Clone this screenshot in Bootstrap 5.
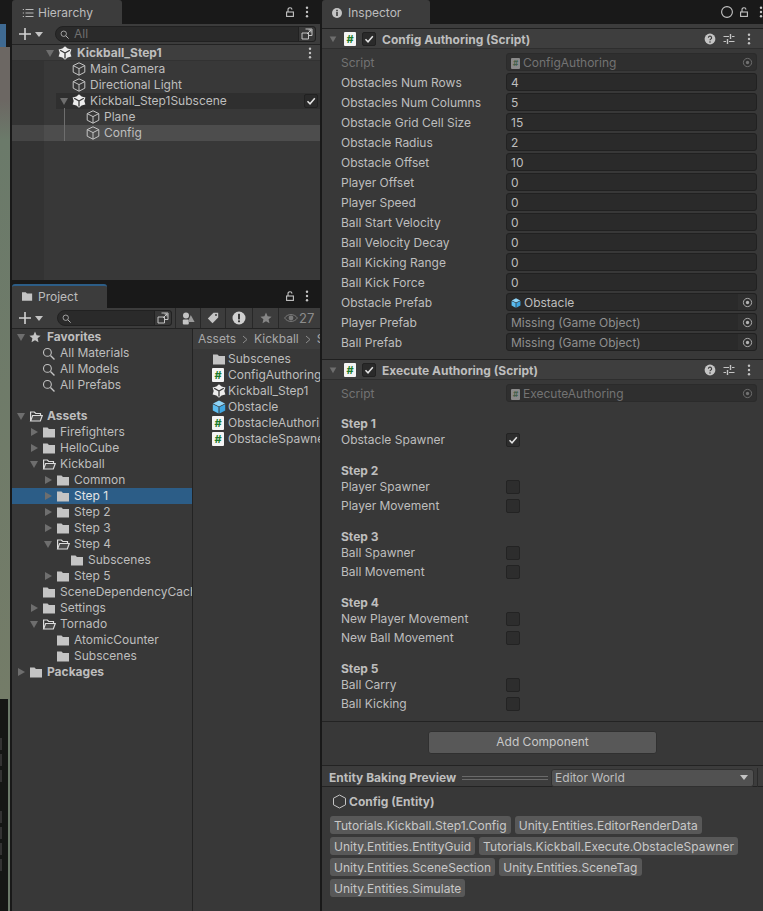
<!DOCTYPE html>
<html lang="en">
<head>
  <meta charset="UTF-8">
  <title>Unity Editor - Inspector</title>
  <link href="https://cdn.jsdelivr.net/npm/bootstrap@5.3.0/dist/css/bootstrap.min.css" rel="stylesheet">
  <style>
    html, body { height: 100%; }
    body { background: #191919; font-family: Inter, "Liberation Sans", sans-serif; font-size: 12px; line-height: 16px; color: #bebebe; overflow: hidden; }
    svg { display: block; flex: none; }

    .editor { width: 763px; height: 911px; }
    .scene-strip { width: 10px; flex: none; background: linear-gradient(#6c6763 0, #6c6763 100px, #6b7a6a 140px, #747c68 699px); }
    .scene-top { height: 24px; background: #191919; }
    .scene-blue { height: 23px; background: #3f6a92; border-right: 4px solid #191919; }
    .scene-tools { height: 212px; margin-top: auto; padding-top: 39px; background: #151715; border-right: 2px solid #6b7a6a; }
    .scene-key { width: 2px; height: 12px; margin-bottom: 4px; background: #333; }
    .scene-key-gap { margin-bottom: 29px; }
    .left-col { width: 308px; margin: 0 2px; flex: none; }
    .insp-col { width: 441px; flex: none; background: #383838; }

    /* tabs */
    .tabbar { height: 24px; flex: none; background: #191919; }
    .tab { height: 24px; background: #3c3c3c; border-radius: 3px 3px 0 0; padding: 2px 0 0 10px; color: #bdbdbd; gap: 4px; }
    .tab-hier { width: 110px; }
    .tab-proj { width: 95px; padding-top: 0; border-top: 2px solid #2c5d87; }
    .tab-insp { width: 108px; gap: 6px; }
    .tab-tools { gap: 11px; padding-right: 11px; }
    .insp-tools { padding-right: 0; }
    .circle-tool { margin-right: -4px; }

    .toolbar { height: 21px; flex: none; background: #3c3c3c; border-bottom: 1px solid #232323; }
    .plus { width: 30px; padding-left: 7px; gap: 4px; }
    .searchbox { height: 16px; background: #2a2a2a; border: 1px solid #212121; border-radius: 8px 3px 3px 8px; color: #6f6f6f; padding-left: 4px; gap: 5px; }
    .search-h { width: 261px; margin-left: 13px; }
    .search-p { width: 115px; margin-left: 15px; }
    .search-end { width: 17px; height: 14px; border-left: 1px solid #212121; background: #383838; border-radius: 0 3px 3px 0; }
    .tool-btn { width: 26px; height: 20px; border-left: 1px solid #282828; }
    .tool-narrow { width: 25px; }
    .tool-wide { width: 27px; }
    .first-tool { margin-left: 3px; }
    .eye-count { width: 42px; height: 20px; border-left: 1px solid #282828; color: #8c8c8c; font-size: 13px; gap: 1px; padding-left: 5px; }

    /* trees */
    .hier-pane { height: 235px; flex: none; background: linear-gradient(90deg, #333 32px, #383838 32px); }
    .proj-pane { height: 583px; background: #383838; }
    .tree-row { height: 16px; white-space: nowrap; overflow: hidden; }
    .tree-row .caret-slot { width: 12px; flex: none; }
    .tree-row .icon-slot { width: 14px; margin: 0 4px 0 2px; flex: none; }
    .scene-head { background: #3e3e3e; border-bottom: 1px solid #323232; font-weight: 700; }
    .scene-name { padding-left: 1px; }
    .sub-row { background: linear-gradient(90deg, transparent 44px, #2f2f2f 44px); }
    .sel-row { background: linear-gradient(90deg, #454545 32px, #4d4d4d 32px); }
    .lv0p { padding-left: 3px; }
    .lv1p { padding-left: 16px; }
    .lv2p { padding-left: 30px; }
    .lv3p { padding-left: 44px; }
    .hier-lv0 { padding-left: 32px; }
    .hier-lv1 { padding-left: 46px; }
    .hier-lv2 { padding-left: 60px; }
    .sub-check { width: 14px; height: 14px; margin-left: auto; margin-right: 2px; background: #2a2a2a; border: 1px solid #212121; border-radius: 2px; }
    .guide { position: absolute; left: 52px; top: 63px; width: 1px; height: 33px; background: #6e6e6e; }
    .fav-head { font-weight: 700; }
    .tree-sel { background: #2c5d87; color: #e4e4e4; }
    .tree-col { width: 181px; flex: none; overflow: hidden; border-right: 1px solid #232323; }
    .gap-row { height: 15px; }
    .files-col { width: 127px; overflow: hidden; }
    .crumbs { height: 20px; margin-bottom: 2px; background: #3e3e3e; padding-left: 5px; white-space: nowrap; gap: 6px; color: #a9a9a9; }
    .file-row { height: 16px; padding-left: 19px; white-space: nowrap; gap: 2px; }
    .file-row .script-badge { margin-right: 2px; }

    /* inspector */
    .insp-top { height: 4px; flex: none; background: #3c3c3c; }
    .comp-head { height: 21px; flex: none; background: #3e3e3e; border-top: 1px solid #1f1f1f; border-bottom: 1px solid #2e2e2e; padding-left: 6px; font-weight: 700; }
    .comp-title { padding-top: 2px; }
    .comp-foldout { width: 10px; margin-right: 6px; }
    .script-badge { width: 12px; height: 14px; flex: none; background: #f4f4f4; border-radius: 1px; color: #1a7a2b; font-size: 11px; line-height: 14px; font-weight: 700; text-align: center; margin-right: 6px; }
    .field-badge { width: 9px; height: 11px; flex: none; background: #8a8a8a; border-radius: 1px; color: #44604a; font-size: 8px; line-height: 11px; font-weight: 700; text-align: center; }
    .en-check { width: 14px; height: 14px; background: #2a2a2a; border: 1px solid #212121; border-radius: 2px; margin-right: 6px; }
    .comp-tools { margin-left: auto; gap: 7px; padding-right: 12px; }
    .kebab-tool { margin-left: 5px; }
    .prop-list { padding: 3px 6px 7px 19px; }
    .script-list { padding-bottom: 0; }
    .prop-row { height: 20px; }
    .prop-label { width: 165px; flex: none; padding-top: 2px; }
    .prop-field { width: 251px; height: 18px; background: #2a2a2a; border: 1px solid #212121; border-radius: 3px; padding: 2px 0 0 4px; gap: 3px; white-space: nowrap; }
    .field-end { width: 18px; height: 16px; margin: -2px 0 0 auto; border-radius: 0 3px 3px 0; background: #2f2f2f; }
    .muted-row { color: #737373; }
    .muted-row .prop-field { background: #2f2f2f; border-color: #2b2b2b; }
    .missing { color: #8f8f8f; }

    .step-list { padding: 0 6px 0 19px; }
    .step-group { padding-top: 15px; }
    .step-group:first-child { padding-top: 13px; }
    .step-title { height: 16px; font-weight: 700; }
    .step-row { height: 16px; }
    .step-row + .step-row { margin-top: 3px; }
    .step-name { width: 165px; flex: none; }
    .step-box { width: 14px; height: 14px; background: #2d2d2d; border: 1px solid #232323; border-radius: 2px; }

    .add-zone { height: 45px; flex: none; border-top: 1px solid #232323; border-bottom: 1px solid #232323; margin-top: 9px; padding-top: 9px; }
    .add-btn { width: 229px; height: 23px; line-height: 18px; padding: 0 0 2px; background: #585858; border: 1px solid #303030; border-radius: 3px; color: #c8c8c8; font-size: 12px; }
    .bake-bar { height: 21px; flex: none; background: #3c3c3c; border-bottom: 1px solid #232323; padding: 3px 0 0 7px; font-weight: 700; white-space: nowrap; }
    .bake-lines { width: 86px; height: 4px; flex: none; margin: 0 3px 0 6px; border-top: 1px solid #6a6a6a; border-bottom: 1px solid #6a6a6a; }
    .bake-select { width: 203px; height: 18px; flex: none; background: #515151; border: 1px solid #303030; border-radius: 3px; padding: 0 5px 0 3px; font-weight: 400; }
    .bake-end { width: 5px; height: 20px; flex: none; border-left: 1px solid #2b2b2b; margin-left: 3px; }
    .entity-pane { background: #383838; padding: 5px 8px 0; }
    .entity-title { height: 18px; font-weight: 700; margin-bottom: 6px; gap: 2px; padding-left: 2px; }
    .entity-name { padding-top: 2px; }
    .chip-list { gap: 3px 4px; width: 420px; }
    .chip { height: 18px; padding: 0 4px; background: #585858; border-radius: 3px; color: #c8c8c8; white-space: nowrap; line-height: 20px; letter-spacing: .05px; }
  </style>
</head>
<body>
  <svg width="0" height="0" class="position-absolute">
    <defs>
      <symbol id="cube" viewBox="0 0 14 14"><path d="M7 .8 12.8 3.6V10.2L7 13.2 1.2 10.2V3.6ZM1.2 3.6 7 6.6 12.8 3.6M7 6.6V13.2" fill="none" stroke="#c4c4c4" stroke-width="1"/></symbol>
      <symbol id="cube-blue" viewBox="0 0 14 14"><path d="M7 .5 13 3.4 7 6.4 1 3.4Z" fill="#8fd4f7"/><path d="M.8 4.2 6.5 7.1V13.5L.8 10.5Z" fill="#5cbdf0"/><path d="M13.2 4.2 7.5 7.1V13.5L13.2 10.5Z" fill="#3ea6e2"/></symbol>
      <symbol id="unity" viewBox="0 0 14 14"><path d="M7 .3 9.6 2.4 13.4 3.4 12.3 7 13.4 10.6 9.6 11.6 7 13.7 4.4 11.6.6 10.6 1.7 7 .6 3.4 4.4 2.4Z" fill="#ececec"/><path d="M7 7V12.5M7 7 2.2 4.2M7 7 11.8 4.2" stroke="#383838" stroke-width="1.3" fill="none"/></symbol>
      <symbol id="folder" viewBox="0 0 14 14"><path d="M1 2.5H5.5L7 4H13V12.5H1Z" fill="#c4c4c4"/></symbol>
      <symbol id="folder-open" viewBox="0 0 14 14"><path d="M1.6 12V3H5.3L6.8 4.5H11.5V6.5" fill="none" stroke="#dcdcdc" stroke-width="1.2"/><path d="M1.6 12H11.3L13.3 6.5H3.6Z" fill="#4a4a4a" stroke="#dcdcdc" stroke-width="1.2"/></symbol>
      <symbol id="caret-d" viewBox="0 0 12 12"><path d="M2 3H10L6 10Z" fill="#6e6e6e"/></symbol>
      <symbol id="caret-r" viewBox="0 0 12 12"><path d="M3 2 10 6 3 10Z" fill="#6e6e6e"/></symbol>
      <symbol id="lock" viewBox="0 0 8 10"><rect x=".6" y="5" width="6.8" height="4.4" fill="none" stroke="#c4c4c4" stroke-width="1.1"/><path d="M2 5V2.8A2 2 0 0 1 6 2.6" fill="none" stroke="#c4c4c4" stroke-width="1.1"/></symbol>
      <symbol id="kebab" viewBox="0 0 4 12"><circle cx="2" cy="1.8" r="1.2" fill="#c4c4c4"/><circle cx="2" cy="6" r="1.2" fill="#c4c4c4"/><circle cx="2" cy="10.2" r="1.2" fill="#c4c4c4"/></symbol>
      <symbol id="plus" viewBox="0 0 12 12"><path d="M6 0V12M0 6H12" stroke="#d2d2d2" stroke-width="1.6"/></symbol>
      <symbol id="drop" viewBox="0 0 8 5"><path d="M0 0H8L4 5Z" fill="#c4c4c4"/></symbol>
      <symbol id="mag" viewBox="0 0 12 12"><circle cx="5" cy="5" r="3.6" fill="none" stroke="#c4c4c4" stroke-width="1"/><path d="M7.8 7.8 11.5 11.5" stroke="#c4c4c4" stroke-width="1.2"/></symbol>
      <symbol id="expand" viewBox="0 0 12 12"><path d="M4.5 1H11V7.5H8M1 5H7.5V11H1Z M6 6 10 2M7.5 2H10V4.5" fill="none" stroke="#c4c4c4" stroke-width="1"/></symbol>
      <symbol id="picker" viewBox="0 0 12 12"><circle cx="6" cy="6" r="4.5" fill="none" stroke="#b4b4b4" stroke-width="1"/><circle cx="6" cy="6" r="1.8" fill="#b4b4b4"/></symbol>
      <symbol id="tick" viewBox="0 0 12 12"><path d="M2.5 6.3 5 8.8 9.8 3.2" fill="none" stroke="#e4e4e4" stroke-width="1.5"/></symbol>
      <symbol id="help" viewBox="0 0 12 12"><circle cx="6" cy="6" r="5.4" fill="#c4c4c4"/><path d="M4.4 4.7A1.6 1.6 0 1 1 6.6 6.2C6.1 6.5 6 6.7 6 7.3" fill="none" stroke="#3e3e3e" stroke-width="1.2"/><circle cx="6" cy="9" r=".8" fill="#3e3e3e"/></symbol>
      <symbol id="sliders" viewBox="0 0 12 12"><path d="M.5 3.5H6M9 3.5H11.5M.5 8.5H3M6 8.5H11.5" stroke="#c4c4c4" stroke-width="1.2"/><path d="M7.5 1V6M4.5 6V11" stroke="#c4c4c4" stroke-width="1.4"/></symbol>
      <symbol id="star" viewBox="0 0 12 12"><path d="M6 .6 7.6 4.3 11.6 4.7 8.6 7.3 9.5 11.3 6 9.2 2.5 11.3 3.4 7.3.4 4.7 4.4 4.3Z" fill="#c4c4c4"/></symbol>
    </defs>
  </svg>

  <div class="editor d-flex">
    <div class="scene-strip d-flex flex-column">
      <div class="scene-top"></div>
      <div class="scene-blue"></div>
      <div class="scene-tools">
        <div class="scene-key"></div>
        <div class="scene-key"></div>
        <div class="scene-key scene-key-gap"></div>
        <div class="scene-key"></div>
        <div class="scene-key"></div>
        <div class="scene-key"></div>
        <div class="scene-key"></div>
      </div>
    </div>

    <div class="left-col d-flex flex-column">
      <!-- Hierarchy -->
      <div class="tabbar d-flex justify-content-between">
        <div class="tab tab-hier d-flex align-items-center">
          <svg width="12" height="12" viewBox="0 0 12 12"><path d="M3.5 2.5H11.5M3.5 6H11.5M3.5 9.5H11.5" stroke="#b8b8b8"/><path d="M.8 2.5H2M.8 6H2M.8 9.5H2" stroke="#b8b8b8"/></svg>
          <span>Hierarchy</span>
        </div>
        <div class="tab-tools d-flex align-items-center">
          <svg width="8" height="10"><use href="#lock"/></svg>
          <svg width="4" height="12"><use href="#kebab"/></svg>
        </div>
      </div>
      <div class="toolbar d-flex align-items-center">
        <div class="plus d-flex align-items-center">
          <svg width="12" height="12"><use href="#plus"/></svg>
          <svg width="8" height="5"><use href="#drop"/></svg>
        </div>
        <div class="searchbox search-h d-flex align-items-center">
          <svg width="9" height="9"><use href="#mag"/></svg>
          <span class="flex-grow-1">All</span>
          <div class="search-end d-flex align-items-center justify-content-center"><svg width="12" height="12"><use href="#expand"/></svg></div>
        </div>
      </div>
      <div class="hier-pane position-relative">
        <div class="tree-row scene-head hier-lv0 d-flex align-items-center">
          <span class="caret-slot"><svg width="12" height="12"><use href="#caret-d"/></svg></span>
          <span class="icon-slot"><svg width="14" height="14"><use href="#unity"/></svg></span>
          <span class="scene-name flex-grow-1">Kickball_Step1</span>
          <svg class="me-2" width="4" height="12"><use href="#kebab"/></svg>
        </div>
        <div class="tree-row hier-lv1 d-flex align-items-center">
          <span class="caret-slot"></span>
          <span class="icon-slot"><svg width="14" height="14"><use href="#cube"/></svg></span>
          <span>Main Camera</span>
        </div>
        <div class="tree-row hier-lv1 d-flex align-items-center">
          <span class="caret-slot"></span>
          <span class="icon-slot"><svg width="14" height="14"><use href="#cube"/></svg></span>
          <span>Directional Light</span>
        </div>
        <div class="tree-row hier-lv1 sub-row d-flex align-items-center">
          <span class="caret-slot"><svg width="12" height="12"><use href="#caret-d"/></svg></span>
          <span class="icon-slot"><svg width="14" height="14"><use href="#unity"/></svg></span>
          <span>Kickball_Step1Subscene</span>
          <span class="sub-check d-flex align-items-center justify-content-center"><svg width="12" height="12"><use href="#tick"/></svg></span>
        </div>
        <div class="tree-row hier-lv2 d-flex align-items-center">
          <span class="caret-slot"></span>
          <span class="icon-slot"><svg width="14" height="14"><use href="#cube"/></svg></span>
          <span>Plane</span>
        </div>
        <div class="tree-row hier-lv2 sel-row d-flex align-items-center">
          <span class="caret-slot"></span>
          <span class="icon-slot"><svg width="14" height="14"><use href="#cube"/></svg></span>
          <span>Config</span>
        </div>
        <div class="guide"></div>
      </div>

      <!-- Project -->
      <div class="tabbar mt-1 d-flex justify-content-between">
        <div class="tab tab-proj d-flex align-items-center">
          <svg width="12" height="12" viewBox="1 1 12 12"><use href="#folder"/></svg>
          <span>Project</span>
        </div>
        <div class="tab-tools d-flex align-items-center">
          <svg width="8" height="10"><use href="#lock"/></svg>
          <svg width="4" height="12"><use href="#kebab"/></svg>
        </div>
      </div>
      <div class="toolbar d-flex align-items-center">
        <div class="plus d-flex align-items-center">
          <svg width="12" height="12"><use href="#plus"/></svg>
          <svg width="8" height="5"><use href="#drop"/></svg>
        </div>
        <div class="searchbox search-p d-flex align-items-center">
          <svg width="9" height="9"><use href="#mag"/></svg>
          <span class="flex-grow-1"></span>
          <div class="search-end d-flex align-items-center justify-content-center"><svg width="12" height="12"><use href="#expand"/></svg></div>
        </div>
        <div class="tool-btn tool-narrow first-tool d-flex align-items-center justify-content-center">
          <svg width="13" height="13" viewBox="0 0 13 13"><circle cx="4" cy="3.5" r="3" fill="#c4c4c4"/><rect x=".8" y="7.5" width="6" height="5" rx="1" fill="#c4c4c4"/><path d="M8.8 3 12.6 10H5.8Z" fill="#9a9a9a"/></svg>
        </div>
        <div class="tool-btn tool-narrow d-flex align-items-center justify-content-center">
          <svg width="12" height="12" viewBox="0 0 12 12"><path d="M6.5.8H11.2V5.5L5.5 11.2.8 6.5Z" fill="#c4c4c4"/><circle cx="9" cy="3" r="1" fill="#3c3c3c"/></svg>
        </div>
        <div class="tool-btn tool-wide d-flex align-items-center justify-content-center">
          <svg width="14" height="14" viewBox="0 0 14 14"><circle cx="7" cy="7" r="6.5" fill="#d0d0d0"/><rect x="6" y="2.8" width="2" height="5.6" fill="#3c3c3c"/><rect x="6" y="9.4" width="2" height="1.8" fill="#3c3c3c"/></svg>
        </div>
        <div class="tool-btn d-flex align-items-center justify-content-center">
          <svg width="12" height="12" opacity=".55"><use href="#star"/></svg>
        </div>
        <div class="eye-count d-flex align-items-center">
          <svg width="14" height="10" viewBox="0 0 14 10"><path d="M.6 5C3.6.4 10.4.4 13.4 5 10.4 9.6 3.6 9.6.6 5Z" fill="none" stroke="#7a7a7a"/><circle cx="7" cy="5" r="2.4" fill="#7a7a7a"/></svg>
          <span>27</span>
        </div>
      </div>
      <div class="proj-pane d-flex">
        <div class="tree-col">
          <div class="tree-row lv0p fav-head d-flex align-items-center">
            <span class="caret-slot"><svg width="12" height="12"><use href="#caret-d"/></svg></span>
            <span class="icon-slot"><svg width="12" height="12"><use href="#star"/></svg></span><span>Favorites</span>
          </div>
          <div class="tree-row lv1p d-flex align-items-center"><span class="caret-slot"></span><span class="icon-slot"><svg width="13" height="13"><use href="#mag"/></svg></span><span>All Materials</span></div>
          <div class="tree-row lv1p d-flex align-items-center"><span class="caret-slot"></span><span class="icon-slot"><svg width="13" height="13"><use href="#mag"/></svg></span><span>All Models</span></div>
          <div class="tree-row lv1p d-flex align-items-center"><span class="caret-slot"></span><span class="icon-slot"><svg width="13" height="13"><use href="#mag"/></svg></span><span>All Prefabs</span></div>
          <div class="gap-row"></div>
          <div class="tree-row lv0p fav-head d-flex align-items-center"><span class="caret-slot"><svg width="12" height="12"><use href="#caret-d"/></svg></span><span class="icon-slot"><svg width="14" height="14"><use href="#folder-open"/></svg></span><span>Assets</span></div>
          <div class="tree-row lv1p d-flex align-items-center"><span class="caret-slot"><svg width="12" height="12"><use href="#caret-r"/></svg></span><span class="icon-slot"><svg width="14" height="14"><use href="#folder"/></svg></span><span>Firefighters</span></div>
          <div class="tree-row lv1p d-flex align-items-center"><span class="caret-slot"><svg width="12" height="12"><use href="#caret-r"/></svg></span><span class="icon-slot"><svg width="14" height="14"><use href="#folder"/></svg></span><span>HelloCube</span></div>
          <div class="tree-row lv1p d-flex align-items-center"><span class="caret-slot"><svg width="12" height="12"><use href="#caret-d"/></svg></span><span class="icon-slot"><svg width="14" height="14"><use href="#folder-open"/></svg></span><span>Kickball</span></div>
          <div class="tree-row lv2p d-flex align-items-center"><span class="caret-slot"><svg width="12" height="12"><use href="#caret-r"/></svg></span><span class="icon-slot"><svg width="14" height="14"><use href="#folder"/></svg></span><span>Common</span></div>
          <div class="tree-row lv2p tree-sel d-flex align-items-center"><span class="caret-slot"><svg width="12" height="12"><use href="#caret-r"/></svg></span><span class="icon-slot"><svg width="14" height="14"><use href="#folder"/></svg></span><span>Step 1</span></div>
          <div class="tree-row lv2p d-flex align-items-center"><span class="caret-slot"><svg width="12" height="12"><use href="#caret-r"/></svg></span><span class="icon-slot"><svg width="14" height="14"><use href="#folder"/></svg></span><span>Step 2</span></div>
          <div class="tree-row lv2p d-flex align-items-center"><span class="caret-slot"><svg width="12" height="12"><use href="#caret-r"/></svg></span><span class="icon-slot"><svg width="14" height="14"><use href="#folder"/></svg></span><span>Step 3</span></div>
          <div class="tree-row lv2p d-flex align-items-center"><span class="caret-slot"><svg width="12" height="12"><use href="#caret-d"/></svg></span><span class="icon-slot"><svg width="14" height="14"><use href="#folder-open"/></svg></span><span>Step 4</span></div>
          <div class="tree-row lv3p d-flex align-items-center"><span class="caret-slot"></span><span class="icon-slot"><svg width="14" height="14"><use href="#folder"/></svg></span><span>Subscenes</span></div>
          <div class="tree-row lv2p d-flex align-items-center"><span class="caret-slot"><svg width="12" height="12"><use href="#caret-r"/></svg></span><span class="icon-slot"><svg width="14" height="14"><use href="#folder"/></svg></span><span>Step 5</span></div>
          <div class="tree-row lv1p d-flex align-items-center"><span class="caret-slot"></span><span class="icon-slot"><svg width="14" height="14"><use href="#folder"/></svg></span><span>SceneDependencyCache</span></div>
          <div class="tree-row lv1p d-flex align-items-center"><span class="caret-slot"><svg width="12" height="12"><use href="#caret-r"/></svg></span><span class="icon-slot"><svg width="14" height="14"><use href="#folder"/></svg></span><span>Settings</span></div>
          <div class="tree-row lv1p d-flex align-items-center"><span class="caret-slot"><svg width="12" height="12"><use href="#caret-d"/></svg></span><span class="icon-slot"><svg width="14" height="14"><use href="#folder-open"/></svg></span><span>Tornado</span></div>
          <div class="tree-row lv2p d-flex align-items-center"><span class="caret-slot"></span><span class="icon-slot"><svg width="14" height="14"><use href="#folder"/></svg></span><span>AtomicCounter</span></div>
          <div class="tree-row lv2p d-flex align-items-center"><span class="caret-slot"></span><span class="icon-slot"><svg width="14" height="14"><use href="#folder"/></svg></span><span>Subscenes</span></div>
          <div class="tree-row lv0p fav-head d-flex align-items-center"><span class="caret-slot"><svg width="12" height="12"><use href="#caret-r"/></svg></span><span class="icon-slot"><svg width="14" height="14"><use href="#folder"/></svg></span><span>Packages</span></div>
        </div>
        <div class="files-col">
          <div class="crumbs d-flex align-items-center">
            <span>Assets</span>
            <svg width="6" height="9" viewBox="0 0 6 9"><path d="M1 1 5 4.5 1 8" fill="none" stroke="#8c8c8c"/></svg>
            <span>Kickball</span>
            <svg width="6" height="9" viewBox="0 0 6 9"><path d="M1 1 5 4.5 1 8" fill="none" stroke="#8c8c8c"/></svg>
            <span>Step 1</span>
          </div>
          <div class="file-row d-flex align-items-center"><svg width="14" height="14"><use href="#folder"/></svg><span>Subscenes</span></div>
          <div class="file-row d-flex align-items-center"><span class="script-badge">#</span><span>ConfigAuthoring</span></div>
          <div class="file-row d-flex align-items-center"><svg width="14" height="14"><use href="#unity"/></svg><span>Kickball_Step1</span></div>
          <div class="file-row d-flex align-items-center"><svg width="14" height="14"><use href="#cube-blue"/></svg><span>Obstacle</span></div>
          <div class="file-row d-flex align-items-center"><span class="script-badge">#</span><span>ObstacleAuthoring</span></div>
          <div class="file-row d-flex align-items-center"><span class="script-badge">#</span><span>ObstacleSpawner</span></div>
        </div>
      </div>
    </div>

    <!-- Inspector -->
    <div class="insp-col d-flex flex-column">
      <div class="tabbar d-flex justify-content-between">
        <div class="tab tab-insp d-flex align-items-center">
          <svg width="10" height="10" viewBox="0 0 10 10"><circle cx="5" cy="5" r="5" fill="#c4c4c4"/><rect x="4.2" y="4" width="1.6" height="4" fill="#3c3c3c"/><rect x="4.2" y="1.8" width="1.6" height="1.5" fill="#3c3c3c"/></svg>
          <span>Inspector</span>
        </div>
        <div class="tab-tools insp-tools d-flex align-items-center">
          <svg class="circle-tool" width="12" height="12" viewBox="0 0 12 12"><circle cx="6" cy="6" r="5.4" fill="none" stroke="#c4c4c4" stroke-width="1.1"/></svg>
          <svg width="8" height="10"><use href="#lock"/></svg>
          <svg width="4" height="12"><use href="#kebab"/></svg>
        </div>
      </div>
      <div class="insp-top"></div>

      <div class="comp-head d-flex align-items-center">
        <svg class="comp-foldout" width="10" height="10" viewBox="0 0 12 12"><use href="#caret-d"/></svg>
        <span class="script-badge">#</span>
        <span class="en-check d-flex align-items-center justify-content-center"><svg width="12" height="12"><use href="#tick"/></svg></span>
        <span class="comp-title">Config Authoring (Script)</span>
        <div class="comp-tools d-flex align-items-center">
          <svg width="12" height="12"><use href="#help"/></svg>
          <svg width="12" height="12"><use href="#sliders"/></svg>
          <svg class="kebab-tool" width="4" height="12"><use href="#kebab"/></svg>
        </div>
      </div>
      <div class="prop-list">
        <div class="prop-row muted-row d-flex align-items-center">
          <span class="prop-label">Script</span>
          <div class="prop-field d-flex align-items-center">
            <span class="field-badge">#</span><span>ConfigAuthoring</span>
            <span class="field-end d-flex align-items-center justify-content-center"><svg class="opacity-50" width="11" height="11"><use href="#picker"/></svg></span>
          </div>
        </div>
        <div class="prop-row d-flex align-items-center"><span class="prop-label">Obstacles Num Rows</span><div class="prop-field d-flex align-items-center">4</div></div>
        <div class="prop-row d-flex align-items-center"><span class="prop-label">Obstacles Num Columns</span><div class="prop-field d-flex align-items-center">5</div></div>
        <div class="prop-row d-flex align-items-center"><span class="prop-label">Obstacle Grid Cell Size</span><div class="prop-field d-flex align-items-center">15</div></div>
        <div class="prop-row d-flex align-items-center"><span class="prop-label">Obstacle Radius</span><div class="prop-field d-flex align-items-center">2</div></div>
        <div class="prop-row d-flex align-items-center"><span class="prop-label">Obstacle Offset</span><div class="prop-field d-flex align-items-center">10</div></div>
        <div class="prop-row d-flex align-items-center"><span class="prop-label">Player Offset</span><div class="prop-field d-flex align-items-center">0</div></div>
        <div class="prop-row d-flex align-items-center"><span class="prop-label">Player Speed</span><div class="prop-field d-flex align-items-center">0</div></div>
        <div class="prop-row d-flex align-items-center"><span class="prop-label">Ball Start Velocity</span><div class="prop-field d-flex align-items-center">0</div></div>
        <div class="prop-row d-flex align-items-center"><span class="prop-label">Ball Velocity Decay</span><div class="prop-field d-flex align-items-center">0</div></div>
        <div class="prop-row d-flex align-items-center"><span class="prop-label">Ball Kicking Range</span><div class="prop-field d-flex align-items-center">0</div></div>
        <div class="prop-row d-flex align-items-center"><span class="prop-label">Ball Kick Force</span><div class="prop-field d-flex align-items-center">0</div></div>
        <div class="prop-row d-flex align-items-center">
          <span class="prop-label">Obstacle Prefab</span>
          <div class="prop-field d-flex align-items-center">
            <svg width="10" height="10"><use href="#cube-blue"/></svg><span>Obstacle</span>
            <span class="field-end d-flex align-items-center justify-content-center"><svg width="11" height="11"><use href="#picker"/></svg></span>
          </div>
        </div>
        <div class="prop-row d-flex align-items-center">
          <span class="prop-label">Player Prefab</span>
          <div class="prop-field missing d-flex align-items-center">
            <span>Missing (Game Object)</span>
            <span class="field-end d-flex align-items-center justify-content-center"><svg width="11" height="11"><use href="#picker"/></svg></span>
          </div>
        </div>
        <div class="prop-row d-flex align-items-center">
          <span class="prop-label">Ball Prefab</span>
          <div class="prop-field missing d-flex align-items-center">
            <span>Missing (Game Object)</span>
            <span class="field-end d-flex align-items-center justify-content-center"><svg width="11" height="11"><use href="#picker"/></svg></span>
          </div>
        </div>
      </div>

      <div class="comp-head d-flex align-items-center">
        <svg class="comp-foldout" width="10" height="10" viewBox="0 0 12 12"><use href="#caret-d"/></svg>
        <span class="script-badge">#</span>
        <span class="en-check d-flex align-items-center justify-content-center"><svg width="12" height="12"><use href="#tick"/></svg></span>
        <span class="comp-title">Execute Authoring (Script)</span>
        <div class="comp-tools d-flex align-items-center">
          <svg width="12" height="12"><use href="#help"/></svg>
          <svg width="12" height="12"><use href="#sliders"/></svg>
          <svg class="kebab-tool" width="4" height="12"><use href="#kebab"/></svg>
        </div>
      </div>
      <div class="prop-list script-list">
        <div class="prop-row muted-row d-flex align-items-center">
          <span class="prop-label">Script</span>
          <div class="prop-field d-flex align-items-center">
            <span class="field-badge">#</span><span>ExecuteAuthoring</span>
            <span class="field-end d-flex align-items-center justify-content-center"><svg class="opacity-50" width="11" height="11"><use href="#picker"/></svg></span>
          </div>
        </div>
      </div>
      <div class="step-list">
        <div class="step-group">
          <div class="step-title d-flex align-items-center">Step 1</div>
          <div class="step-row d-flex align-items-center"><span class="step-name">Obstacle Spawner</span><span class="step-box d-flex align-items-center justify-content-center"><svg width="12" height="12"><use href="#tick"/></svg></span></div>
        </div>
        <div class="step-group">
          <div class="step-title d-flex align-items-center">Step 2</div>
          <div class="step-row d-flex align-items-center"><span class="step-name">Player Spawner</span><span class="step-box"></span></div>
          <div class="step-row d-flex align-items-center"><span class="step-name">Player Movement</span><span class="step-box"></span></div>
        </div>
        <div class="step-group">
          <div class="step-title d-flex align-items-center">Step 3</div>
          <div class="step-row d-flex align-items-center"><span class="step-name">Ball Spawner</span><span class="step-box"></span></div>
          <div class="step-row d-flex align-items-center"><span class="step-name">Ball Movement</span><span class="step-box"></span></div>
        </div>
        <div class="step-group">
          <div class="step-title d-flex align-items-center">Step 4</div>
          <div class="step-row d-flex align-items-center"><span class="step-name">New Player Movement</span><span class="step-box"></span></div>
          <div class="step-row d-flex align-items-center"><span class="step-name">New Ball Movement</span><span class="step-box"></span></div>
        </div>
        <div class="step-group">
          <div class="step-title d-flex align-items-center">Step 5</div>
          <div class="step-row d-flex align-items-center"><span class="step-name">Ball Carry</span><span class="step-box"></span></div>
          <div class="step-row d-flex align-items-center"><span class="step-name">Ball Kicking</span><span class="step-box"></span></div>
        </div>
      </div>

      <div class="add-zone d-flex align-items-start justify-content-center">
        <button type="button" class="btn add-btn">Add Component</button>
      </div>
      <div class="bake-bar d-flex align-items-center">
        <span>Entity Baking Preview</span>
        <span class="bake-lines"></span>
        <div class="bake-select d-flex align-items-center justify-content-between">
          <span>Editor World</span>
          <svg width="8" height="5"><use href="#drop"/></svg>
        </div>
        <span class="bake-end"></span>
      </div>
      <div class="entity-pane flex-grow-1">
        <div class="entity-title d-flex align-items-center">
          <svg width="15" height="15" viewBox="0 0 15 15"><path d="M7.5 1 13.5 4.2V10.8L7.5 14 1.5 10.8V4.2Z" fill="none" stroke="#c4c4c4" stroke-width="1"/></svg>
          <span class="entity-name">Config (Entity)</span>
        </div>
        <div class="chip-list d-flex flex-wrap">
          <span class="chip">Tutorials.Kickball.Step1.Config</span>
          <span class="chip">Unity.Entities.EditorRenderData</span>
          <span class="chip">Unity.Entities.EntityGuid</span>
          <span class="chip">Tutorials.Kickball.Execute.ObstacleSpawner</span>
          <span class="chip">Unity.Entities.SceneSection</span>
          <span class="chip">Unity.Entities.SceneTag</span>
          <span class="chip">Unity.Entities.Simulate</span>
        </div>
      </div>
    </div>
  </div>
</body>
</html>
